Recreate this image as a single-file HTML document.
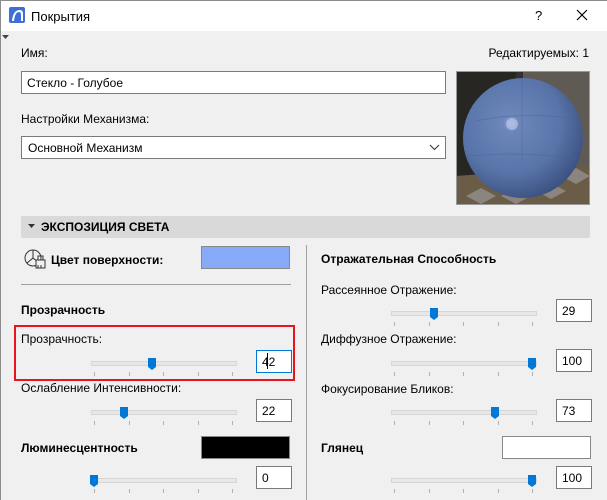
<!DOCTYPE html>
<html><head><meta charset="utf-8"><style>
*{margin:0;padding:0;box-sizing:border-box}
body{width:607px;height:500px;overflow:hidden;background:#f0f0f0;font-family:"Liberation Sans",Arial,sans-serif;font-size:12px;color:#000;position:relative}
.a{position:absolute;white-space:nowrap}
.b{font-weight:bold}
.inp{position:absolute;background:#fff;border:1px solid #7a7a7a;height:23px;padding:4px 0 0 5px}
.tr{position:absolute;height:5px;width:146px;background:#e7e7e7;border:1px solid #d6d6d6}
.th{position:absolute;width:8px;height:12px}
.tk{position:absolute;width:1px;height:4px;background:#b0b0b0}
</style></head><body>
<div class="a" style="left:0;top:0;width:607px;height:31px;background:#fff"></div>
<div class="a" style="left:0;top:0;width:1px;height:500px;background:#8c8c8c"></div>
<div class="a" style="left:0;top:0;width:607px;height:1px;background:#8c8c8c"></div>
<svg class="a" style="left:9px;top:7px" width="16" height="16" viewBox="0 0 16 16"><rect width="16" height="16" rx="2" fill="#3f6fd6"/><path d="M3 14 Q4 3 11 3 Q14 3 14 7 L14 14 L12 14 L12 8 Q12 5 10 5 Q6 5 5 14Z" fill="#fff"/></svg>
<div class="a" style="left:31px;top:9px;font-size:13px">Покрытия</div>
<div class="a" style="left:535px;top:8px;font-size:13px">?</div>
<svg class="a" style="left:576px;top:9px" width="12" height="12"><path d="M1 1L11 11M11 1L1 11" stroke="#000" stroke-width="1.2"/></svg>
<svg class="a" style="left:2px;top:35px" width="7" height="5"><path d="M0 0H7L3.5 4Z" fill="#444"/></svg>

<div class="a" style="left:21px;top:46px">Имя:</div>
<div class="a" style="right:18px;top:46px">Редактируемых: 1</div>
<div class="inp" style="left:21px;top:71px;width:425px">Стекло - Голубое</div>
<div class="a" style="left:21px;top:112px">Настройки Механизма:</div>
<div class="inp" style="left:21px;top:136px;width:425px;padding-left:6px">Основной Механизм</div>
<svg class="a" style="left:429px;top:144px" width="11" height="7"><path d="M1 1L5.5 5.5L10 1" stroke="#333" fill="none"/></svg>

<svg class="a" style="left:456px;top:71px" width="134" height="134" viewBox="0 0 134 134">
<defs><radialGradient id="g" cx="0.4" cy="0.38" r="0.7"><stop offset="0" stop-color="#8fa6d6"/><stop offset="0.1" stop-color="#6c86ba"/><stop offset="0.6" stop-color="#5873a8"/><stop offset="1" stop-color="#364a78"/></radialGradient></defs>
<rect width="134" height="134" fill="#33312d"/>
<rect x="0" y="0" width="60" height="134" fill="#282622"/>
<rect x="67" y="0" width="67" height="134" fill="#5f5a53"/>
<path d="M0 105L134 95V134H0Z" fill="#6b5c47"/>
<path d="M10 125l15-8 15 8-15 8zM45 125l15-8 15 8-15 8zM80 120l15-8 15 8-15 8zM105 105l15-8 14 8-14 8z" fill="#8a857e"/>
<rect x="0.5" y="0.5" width="133" height="133" fill="none" stroke="#999"/>
<circle cx="67" cy="67" r="60" fill="url(#g)"/>
<path d="M66 7V90M20 50Q66 40 120 48M12 85Q66 80 122 88" stroke="#4a6598" stroke-width="1" fill="none" opacity=".5"/>
<circle cx="56" cy="53" r="6" fill="#c8d4f0" opacity=".55"/>
</svg>

<div class="a" style="left:21px;top:216px;width:569px;height:22px;background:#d9d9d9;border-radius:2px"></div>
<svg class="a" style="left:28px;top:224px" width="7" height="5"><path d="M0 0H7L3.5 4Z" fill="#333"/></svg>
<div class="a b" style="left:41px;top:220px">ЭКСПОЗИЦИЯ СВЕТА</div>

<div class="a" style="left:306px;top:245px;width:1px;height:255px;background:#a0a0a0"></div>

<svg class="a" style="left:23px;top:248px" width="24" height="22" viewBox="0 0 24 22"><circle cx="10" cy="10" r="8" fill="none" stroke="#333"/><path d="M10 2V10L4 15M10 10L16 15" stroke="#333" fill="none"/><rect x="13" y="12" width="9" height="8" fill="#f0f0f0" stroke="#333"/><path d="M15 12V8h5v4M15 20v-3M18 20v-3" stroke="#333" fill="none"/></svg>
<div class="a b" style="left:51px;top:253px">Цвет поверхности:</div>
<div class="a" style="left:201px;top:246px;width:89px;height:23px;background:#86a9f8;border:1px solid #888"></div>
<div class="a" style="left:21px;top:284px;width:270px;height:1px;background:#a0a0a0"></div>
<div class="a b" style="left:21px;top:303px">Прозрачность</div>

<div class="a" style="left:14px;top:325px;width:281px;height:56px;border:2px solid #e8141e"></div>
<div class="a" style="left:21px;top:332px">Прозрачность:</div>
<div class="a" style="left:21px;top:381px">Ослабление Интенсивности:</div>
<div class="a b" style="left:21px;top:441px">Люминесцентность</div>
<div class="a" style="left:201px;top:436px;width:89px;height:23px;background:#000;border:1px solid #888"></div>

<div class="a b" style="left:321px;top:252px">Отражательная Способность</div>
<div class="a" style="left:321px;top:283px">Рассеянное Отражение:</div>
<div class="a" style="left:321px;top:332px">Диффузное Отражение:</div>
<div class="a" style="left:321px;top:382px">Фокусирование Бликов:</div>
<div class="a b" style="left:321px;top:441px">Глянец</div>
<div class="a" style="left:502px;top:436px;width:89px;height:23px;background:#fff;border:1px solid #888"></div>

<div id="sl"></div>
<script>
var S=[[91,361,152,256,350,"42",1],[91,410,124,256,399,"22",0],[91,478,94,256,466,"0",0],
[391,311,434,556,299,"29",0],[391,361,532,556,349,"100",0],[391,410,495,556,399,"73",0],[391,478,532,556,466,"100",0]];
var h="";
S.forEach(function(s){
h+='<div class="tr" style="left:'+s[0]+'px;top:'+s[1]+'px"></div>';
for(var i=0;i<5;i++)h+='<div class="tk" style="left:'+(s[0]+3+i*34.5)+'px;top:'+(s[1]+11)+'px"></div>';
h+='<svg class="th" style="left:'+(s[2]-4)+'px;top:'+(s[1]-3)+'px" width="8" height="12"><path d="M0 0H8V9L4 12L0 9Z" fill="#0078d7"/></svg>';
h+='<div class="inp" style="left:'+s[3]+'px;top:'+s[4]+'px;width:36px;'+(s[6]?'border-color:#0078d7':'')+'">'+s[5]+'</div>';
});
document.getElementById("sl").innerHTML=h;
</script>
<div class="a" style="left:267px;top:353px;width:1px;height:16px;background:#000"></div>
</body></html>
